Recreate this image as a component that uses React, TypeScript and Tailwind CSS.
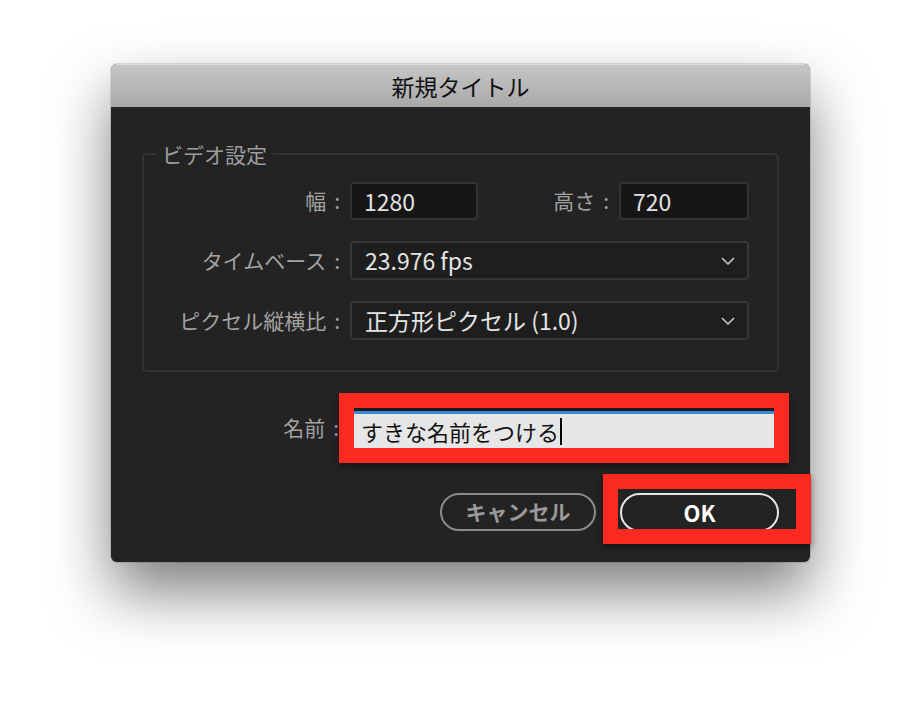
const font = { fontFamily: '"Noto Sans CJK JP", "Noto Sans", sans-serif' };

function Label({ text }: { text: string }) {
  return (
    <span className="text-[21px] text-[#a2a2a2] whitespace-nowrap">
      {text}
      <span className="ml-2">:</span>
    </span>
  );
}

function Chevron() {
  return (
    <svg width="14" height="8" viewBox="0 0 14 8" fill="none" className="text-[#c8c8c8]">
      <polyline points="1,1 7,7 13,1" stroke="currentColor" strokeWidth="1.6" strokeLinejoin="round" />
    </svg>
  );
}

function Select({ value }: { value: string }) {
  return (
    <div className="flex-1 h-[39px] flex items-center justify-between pl-[13px] pr-[12px] bg-[#1e1e1e] border-2 border-[#363636] rounded-[4px]">
      <span className="text-[23px] text-[#e4e4e4]">{value}</span>
      <Chevron />
    </div>
  );
}

export default function App() {
  return (
    <div className="min-h-screen w-full bg-white pt-[64px] pl-[111px]" style={font}>
      <div className="w-[699px] h-[498px] rounded-[6px] bg-[#232323] shadow-[0_30px_60px_rgba(0,0,0,0.5),0_0_0_1px_rgba(0,0,0,0.12)] flex flex-col">
        {/* title bar */}
        <div className="h-[43px] rounded-t-[6px] flex items-center justify-center bg-gradient-to-b from-[#c6c6c6] to-[#a9a9a9] border-t border-[#dadada]">
          <span className="text-[23px] text-[#111]">新規タイトル</span>
        </div>

        <div className="flex flex-col px-[31px] pt-[34px]">
          <fieldset className="border-2 border-[#333] rounded-[5px] pl-[5px] pr-[28px] pb-[30px]">
            <legend className="ml-[7px] px-[6px] text-[21px] text-[#9e9e9e] leading-[26px]">ビデオ設定</legend>

            <div className="flex flex-col gap-[21px] mt-[15px]">
              <div className="flex items-center">
                <div className="w-[201px] flex justify-end pr-[10px]">
                  <Label text="幅" />
                </div>
                <div className="w-[128px] h-[38px] flex items-center pl-[12px] bg-[#161616] border-2 border-[#333] rounded-[4px]">
                  <span className="text-[23px] text-[#e2e2e2]">1280</span>
                </div>
                <div className="flex-1 flex justify-end pr-[10px]">
                  <Label text="高さ" />
                </div>
                <div className="w-[130px] h-[38px] flex items-center pl-[12px] bg-[#161616] border-2 border-[#333] rounded-[4px]">
                  <span className="text-[23px] text-[#e2e2e2]">720</span>
                </div>
              </div>

              <div className="flex items-center">
                <div className="w-[201px] flex justify-end pr-[10px]">
                  <Label text="タイムベース" />
                </div>
                <Select value="23.976 fps" />
              </div>

              <div className="flex items-center">
                <div className="w-[201px] flex justify-end pr-[10px]">
                  <Label text="ピクセル縦横比" />
                </div>
                <Select value="正方形ピクセル (1.0)" />
              </div>
            </div>
          </fieldset>

          {/* name row */}
          <div className="flex items-center mt-[36px]">
            <div className="w-[209px] flex justify-end pr-[12px]">
              <Label text="名前" />
            </div>
            <div className="relative flex-1 h-[40px] flex flex-col">
              <div className="h-[3px] bg-[#1a1a1a]" />
              <div className="h-[3px] bg-[#3b86d6]" />
              <div className="flex-1 bg-[#e6e6e6] flex items-center pl-[10px]">
                <span className="text-[22px] text-[#111]">すきな名前をつける</span>
                <span className="w-[2px] h-[27px] bg-black ml-[1px]" />
              </div>
              <div className="absolute left-[-12px] right-[-10px] top-[-15px] bottom-[-15px] border-[15px] border-[#fc2a20] shadow-[0_3px_6px_rgba(0,0,0,0.45)]" />
            </div>
          </div>

          {/* buttons */}
          <div className="flex justify-end gap-[24px] mt-[45px]">
            <button className="w-[156px] h-[38px] rounded-full border-2 border-[#8a8a8a] text-[21px] font-bold text-[#9a9a9a]">
              キャンセル
            </button>
            <div className="relative">
              <button className="w-[159px] h-[39px] rounded-full border-2 border-[#e6e6e6] text-[22px] font-bold text-white">
                OK
              </button>
              <div className="absolute left-[-17px] right-[-32px] top-[-19px] bottom-[-12px] border-[15px] border-[#fc2a20] shadow-[0_3px_6px_rgba(0,0,0,0.45)]" />
            </div>
          </div>
        </div>
      </div>
    </div>
  );
}
